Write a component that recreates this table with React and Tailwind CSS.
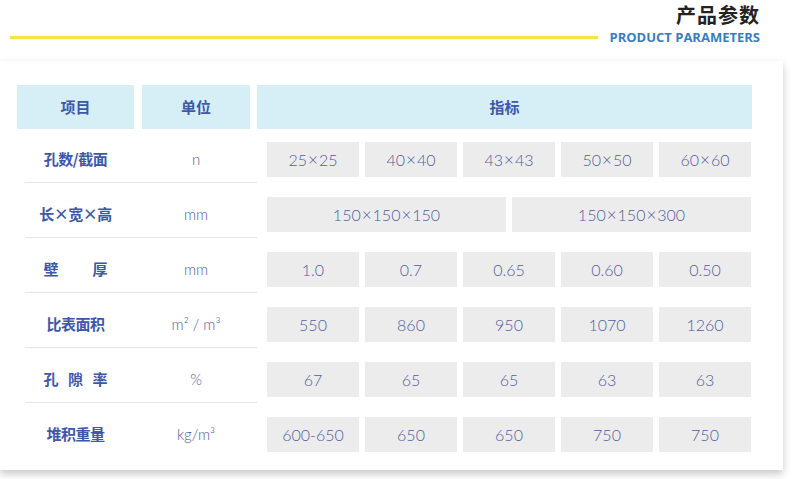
import React from "react";

const rows = [
  { label: ["孔数/截面"], unit: "n", values: ["25×25", "40×40", "43×43", "50×50", "60×60"] },
  { label: ["长×宽×高"], unit: "mm", values: ["150×150×150", "150×150×300"] },
  { label: ["壁", "厚"], unit: "mm", values: ["1.0", "0.7", "0.65", "0.60", "0.50"] },
  { label: ["比表面积"], unit: "m² / m³", values: ["550", "860", "950", "1070", "1260"] },
  { label: ["孔", "隙", "率"], unit: "%", values: ["67", "65", "65", "63", "63"] },
  { label: ["堆积重量"], unit: "kg/m³", values: ["600-650", "650", "650", "750", "750"] },
];

const cjk = { fontFamily: '"Noto Sans CJK SC", "Noto Sans", sans-serif' };
const num = { fontFamily: 'Lato, "Noto Sans CJK SC", sans-serif' };

function Value({ text }) {
  const parts = text.split("×");
  return (
    <>
      {parts.map((p, i) => (
        <React.Fragment key={i}>
          {i > 0 && <span className="mx-[1px] text-[17px]">×</span>}
          {p}
        </React.Fragment>
      ))}
    </>
  );
}

function Label({ parts }) {
  if (parts.length === 1) {
    return <span className="font-bold text-[15px] tracking-[-0.5px] text-[#3e58a6]" style={cjk}>{parts[0]}</span>;
  }
  return (
    <span className="flex w-[64px] justify-between font-bold text-[15px] text-[#3e58a6]" style={cjk}>
      {parts.map((p, i) => (
        <span key={i}>{p}</span>
      ))}
    </span>
  );
}

export default function App() {
  return (
    <div className="relative h-[479px] w-[800px] overflow-hidden bg-white">
      <div className="flex flex-col items-end pr-[40px] pt-[1px]">
        <div className="text-[20px] font-bold leading-[28px] text-[#222] tracking-[1px]" style={cjk}>产品参数</div>
      </div>
      <div className="flex items-center pl-[10px] pr-[40px]">
        <div className="h-[3px] flex-1 bg-[#f3e63e]" />
        <div className="ml-[11px] text-[13px] font-bold leading-[16px] text-[#3a7dbf]" style={{ fontFamily: '"Open Sans", sans-serif' }}>
          PRODUCT PARAMETERS
        </div>
      </div>

      <div className="mt-[16px] h-[409px] w-[783px] bg-white pl-[17px] pt-[24px] shadow-[0_4px_8px_rgba(0,0,0,0.22)]">
        <div className="flex h-[44px] items-stretch">
          <div className="flex w-[117px] items-center justify-center bg-[#d6eef6] text-[15px] font-bold text-[#3e58a6]" style={cjk}>项目</div>
          <div className="ml-[8px] flex w-[108px] items-center justify-center bg-[#d6eef6] text-[15px] font-bold text-[#3e58a6]" style={cjk}>单位</div>
          <div className="ml-[7px] flex w-[495px] items-center justify-center bg-[#d6eef6] text-[15px] font-bold text-[#3e58a6]" style={cjk}>指标</div>
        </div>
        <div className="mt-[13px] flex flex-col">
          {rows.map((r, i) => (
            <div key={i} className="flex h-[55px] items-start">
              <div className={`ml-[8px] flex h-[41px] w-[232px] items-start ${i < rows.length - 1 ? "border-b border-[#e4e6ea]" : ""}`}>
                <div className="flex h-[35px] w-[101px] items-center justify-center">
                  <Label parts={r.label} />
                </div>
                <div className="ml-[16px] flex h-[35px] w-[108px] items-center justify-center text-[15px] font-light text-[#525d9e]" style={num}>
                  {r.unit}
                </div>
              </div>
              <div className="ml-[10px] flex w-[484px] gap-[6px]">
                {r.values.map((v, j) => (
                  <div
                    key={j}
                    className="flex h-[35px] flex-1 items-center justify-center bg-[#ececec] text-[16px] font-light text-[#525d9e]"
                    style={num}
                  >
                    <Value text={v} />
                  </div>
                ))}
              </div>
            </div>
          ))}
        </div>
      </div>
    </div>
  );
}
